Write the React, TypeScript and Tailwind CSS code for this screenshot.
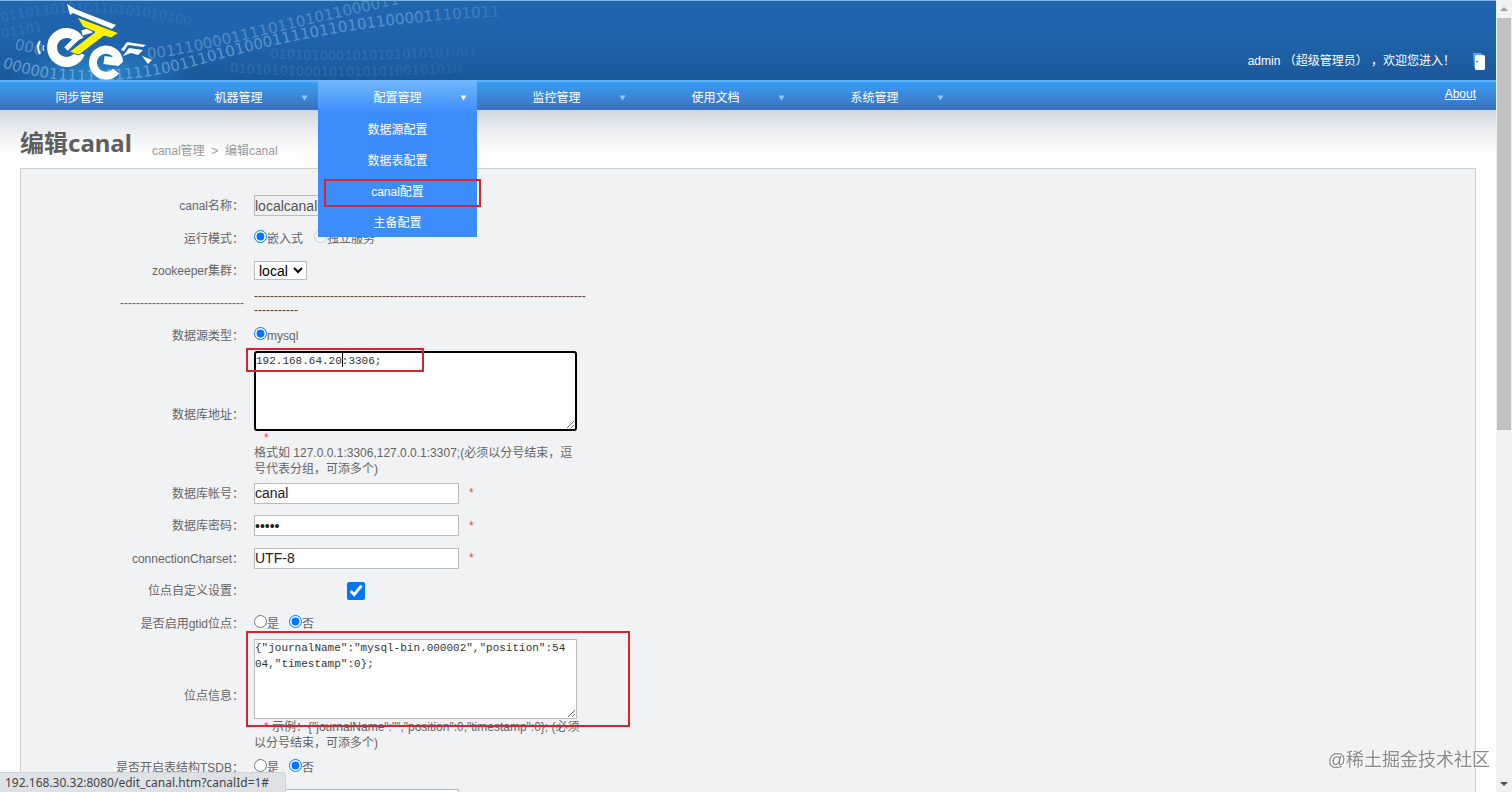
// src/App.tsx
import type { ReactNode } from 'react'

const menus = [
   { title: '同步管理', arrow: false },
   { title: '机器管理', arrow: true },
   { title: '配置管理', arrow: true, items: ['数据源配置', '数据表配置', 'canal配置', '主备配置'] },
   { title: '监控管理', arrow: true },
   { title: '使用文档', arrow: true },
   { title: '系统管理', arrow: true },
]

function Logo() {
   return (
      <svg className="absolute left-0 top-0" width="160" height="79" viewBox="0 1 160 79" fill="none" aria-label="logo">
         {/* wheels */}
         <path d="M80 53 A14.5 14.5 0 1 1 79 40" stroke="#fff" strokeWidth="10" />
         <path d="M66 49 L77 38 M82 33 L92 30" stroke="#fff" strokeWidth="5" />
         <path d="M116 71 A13 13 0 1 1 119 62 L104 60" stroke="#fff" strokeWidth="8" strokeLinejoin="bevel" />
         {/* frame */}
         <path d="M77 17 L119 33 L111 38 L104 36 L79 55 L69 52 L95 32 L83 27 Z" fill="#fff200" stroke="#1f63ab" strokeWidth="1" />
         <path d="M67 4 L75 9 L116 25 L112 29 L80 16 L73 13 L70 15 Z" fill="#fff" />
         {/* tail */}
         <path d="M121 50 L127 42 L146 45 L143 47 L128 45 L124 51 Z" fill="#fff" />
         <path d="M123 56 L129 48 L143 50 L138 55 L131 53 Z" fill="#fff" />
         <path d="M142 56 L152 60 L148 64 Z" fill="#fff" />
         <path d="M40 41 Q36 47 40 54" stroke="#fff" strokeWidth="2" />
         <path d="M44 45 Q42 48 44 51" stroke="#fff" strokeWidth="1" />
      </svg>
   )
}

function Digits() {
   return (
      <svg className="absolute left-0 top-0" width="540" height="79" viewBox="0 1 540 79" aria-hidden="true">
         <defs>
            <radialGradient id="glow">
               <stop offset="0" stopColor="#2f9be0" stopOpacity="0.7" />
               <stop offset="1" stopColor="#2f9be0" stopOpacity="0" />
            </radialGradient>
            <linearGradient id="fade" gradientUnits="userSpaceOnUse" x1="0" x2="540" y1="0" y2="0">
               <stop offset="0" stopColor="#a9d3f5" />
               <stop offset="0.75" stopColor="#8fbfea" />
               <stop offset="1" stopColor="#8fbfea" stopOpacity="0.1" />
            </linearGradient>
            <path id="s1a" d="M14 49 L50 57" />
            <path id="s1b" d="M148 59 C210 52 290 26 420 0" />
            <path id="s2" d="M2 67 C50 84 110 86 180 70 C260 48 350 20 540 15" />
            <path id="s3" d="M2 22 C60 8 140 6 240 40" />
            <path id="s4" d="M270 58 C340 62 400 60 520 52" />
            <path id="s5" d="M2 38 L60 28" />
            <path id="s6" d="M230 72 C300 78 400 78 520 68" />
         </defs>
         <ellipse cx="100" cy="76" rx="90" ry="34" fill="url(#glow)" />
         <g fontFamily="DejaVu Sans, sans-serif" fontSize="15" fill="url(#fade)">
            <text opacity="0.4"><textPath href="#s1a">000</textPath></text>
            <text opacity="0.4"><textPath href="#s1b">001110000111101101011000011</textPath></text>
            <text opacity="0.5"><textPath href="#s2">00000111111111111001110101000111101101011000011101011</textPath></text>
            <g fontSize="13">
               <text opacity="0.12"><textPath href="#s3">01101101010110101010100</textPath></text>
               <text opacity="0.12"><textPath href="#s5">01101</textPath></text>
               <text opacity="0.16"><textPath href="#s4">0101010001010101010101001</textPath></text>
               <text opacity="0.16"><textPath href="#s6">0101010100010101010100101010</textPath></text>
            </g>
         </g>
      </svg>
   )
}

function Row({ label, id, tall, children }: { label: string; id?: string; tall?: boolean; children: ReactNode }) {
   return (
      <div className={tall ? 'flex min-h-[33px] items-center gap-[10px]' : 'flex min-h-8 items-center gap-[10px]'}>
         <label htmlFor={id} className="w-[223px] shrink-0 pt-px text-right">{label}</label>
         <div className="relative w-[332px]">{children}</div>
      </div>
   )
}

function TextField({ id, value, type = 'text' }: { id: string; value: string; type?: string }) {
   return (
      <div className="flex items-center gap-[10px]">
         <input
            id={id}
            type={type}
            defaultValue={value}
            className="h-[21px] w-[205px] border border-[#bbb] bg-white text-sm text-[#222]"
         />
         <Star />
      </div>
   )
}

function Star() {
   return <span className="text-[#e84a4a]">*</span>
}

function Radio({ name, label, checked, disabled }: { name: string; label: string; checked?: boolean; disabled?: boolean }) {
   return (
      <label className="flex items-center pt-px">
         <input type="radio" name={name} defaultChecked={checked} disabled={disabled} className="mb-1 size-[13px]" />
         {label}
      </label>
   )
}

export default function App() {
   return (
      <div className="flex h-screen overflow-hidden bg-white font-['Liberation_Sans','Noto_Sans_CJK_SC',sans-serif] text-xs text-[#666]">
         <div className="min-w-0 flex-1">
            <header className="relative flex h-20 items-end justify-end border-t border-[#7db4e6] bg-linear-to-b from-[#2065ae] via-[#1f63ab] to-[#1b5898] pr-[11px] pb-[10px] text-white">
               <Digits />
               <Logo />
               <div className="flex items-center gap-[18px]">
                  <span>admin （超级管理员） ，欢迎您进入！</span>
                  <button aria-label="退出">
                     <svg width="12" height="18" viewBox="0 0 12 18">
                        <path d="M0 1 L8 1 L11 4 L11 15 L1 16 Z" fill="#5aa5dc" />
                        <rect x="2" y="3" width="10" height="15" rx="1.5" fill="#fff" />
                        <path d="M3 9.5 L5 8.5 L5 10.5 Z" fill="#1f63ab" />
                     </svg>
                  </button>
               </div>
            </header>

            <nav className="relative z-10 flex h-[31px] border-t-2 border-b border-t-[#62b2f6] border-b-[#bcd6f5] bg-linear-to-b from-[#389ef5] to-[#3b70bb] text-white">
               {menus.map((menu) => (
                  <div key={menu.title} className="relative w-[159px]">
                     <a
                        href="#"
                        className={
                           menu.items
                              ? 'relative -mt-[2px] flex h-[33px] items-center justify-center bg-linear-to-b from-[#72b8fb] to-[#3d8cfc] pt-[2px]'
                              : 'flex h-[30px] items-center justify-center pt-px'
                        }
                     >
                        {menu.title}
                        {menu.arrow && (
                           <svg
                              className={menu.items ? 'absolute right-[10px] text-white' : 'absolute right-[10px] text-[#8ccbff]'}
                              width="7"
                              height="6"
                              viewBox="0 0 7 6"
                           >
                              <path d="M0.5 0.5 H6.5 L3.5 5.5 Z" fill="currentColor" />
                           </svg>
                        )}
                     </a>
                     {menu.items && (
                        <ul className="absolute inset-x-0 top-[31px] bg-[#3d8cfc]">
                           {menu.items.map((item) => (
                              <li key={item} className="relative">
                                 <a href="#" className="flex h-[31px] items-center justify-center pt-[2px]">{item}</a>
                                 {item === 'canal配置' && (
                                    <div className="pointer-events-none absolute -right-1 left-[6px] top-1 h-7 border-2 border-[#d9242e]" />
                                 )}
                              </li>
                           ))}
                        </ul>
                     )}
                  </div>
               ))}
               <a href="#" className="mr-5 ml-auto pt-1 underline">About</a>
            </nav>

            <main className="bg-[linear-gradient(#d2d7e0,#eceef1_20px,#fff_44px)] px-5">
               <div className="flex items-end gap-5 pt-4 pb-[9px]">
                  <h1 className="font-['Noto_Sans','Noto_Sans_CJK_SC',sans-serif] text-2xl font-bold text-[#5e5e5e]">编辑canal</h1>
                  <p className="text-[#999]">canal管理 &nbsp;&gt;&nbsp; 编辑canal</p>
               </div>

               <form className="border border-[#ccc] bg-[#f0f2f4] pt-5 pb-10">
                  <Row tall label="canal名称：" id="name">
                     <input
                        id="name"
                        readOnly
                        defaultValue="localcanal"
                        className="block h-[21px] w-[205px] border border-[#bbb] bg-[#f0f0f0] text-sm text-[#555]"
                     />
                  </Row>
                  <Row label="运行模式：">
                     <div className="flex gap-[11px]">
                        <Radio name="mode" label="嵌入式" checked />
                        <Radio name="mode" label="独立服务" disabled />
                     </div>
                  </Row>
                  <Row label="zookeeper集群：" id="zk">
                     <select id="zk" className="block h-[19px] w-[53px] border border-[#bbb] bg-white text-sm leading-4 text-black">
                        <option>local</option>
                     </select>
                  </Row>
                  <Row tall label="-------------------------------">
                     <p className="leading-[14px] text-[#444]">
                        {'-'.repeat(94)}
                     </p>
                  </Row>
                  <Row label="数据源类型：">
                     <Radio name="source" label="mysql" checked />
                  </Row>
                  <Row label="数据库地址：" id="address">
                     <textarea
                        id="address"
                        defaultValue="192.168.64.20:3306;"
                        className="block h-20 w-[323px] rounded-[3px] border-2 border-black bg-white font-['Liberation_Mono',monospace] text-[11px] leading-4 text-[#333] outline-none"
                     />
                     <span className="absolute left-[88px] top-[2px] h-[14px] w-px bg-black" />
                     <div className="absolute -left-2 -top-[3px] h-6 w-[178px] border-2 border-[#d9242e]" />
                     <p className="h-[14px] pl-[10px] leading-[14px]"><Star /></p>
                     <p className="w-[323px]">格式如 127.0.0.1:3306,127.0.0.1:3307;(必须以分号结束，逗号代表分组，可添多个)</p>
                  </Row>
                  <Row label="数据库帐号：" id="user">
                     <TextField id="user" value="canal" />
                  </Row>
                  <Row tall label="数据库密码：" id="password">
                     <TextField id="password" type="password" value="canal" />
                  </Row>
                  <Row label="connectionCharset：" id="charset">
                     <TextField id="charset" value="UTF-8" />
                  </Row>
                  <Row tall label="位点自定义设置：" id="custom">
                     <div className="flex w-[203px] justify-center">
                        <input id="custom" type="checkbox" defaultChecked className="size-[18px]" />
                     </div>
                  </Row>
                  <Row label="是否启用gtid位点：">
                     <div className="flex gap-[10px]">
                        <Radio name="gtid" label="是" />
                        <Radio name="gtid" label="否" checked />
                     </div>
                  </Row>
                  <Row label="位点信息：" id="position">
                     <textarea
                        id="position"
                        defaultValue={'{"journalName":"mysql-bin.000002","position":5404,"timestamp":0};'}
                        className="block h-20 w-[323px] border border-[#bbb] bg-white pr-2 font-['Liberation_Mono',monospace] text-[11px] leading-4 break-all text-[#333]"
                     />
                     <div className="absolute -left-2 -top-2 h-24 w-[384px] border-2 border-[#d9242e]" />
                     <p className="indent-[10px]">
                        <Star /> 示例：{'{"journalName":"","position":0,"timestamp":0};'} (必须以分号结束，可添多个)
                     </p>
                  </Row>
                  <Row label="是否开启表结构TSDB：">
                     <div className="flex gap-[10px]">
                        <Radio name="tsdb" label="是" />
                        <Radio name="tsdb" label="否" checked />
                     </div>
                  </Row>
                  <Row label="rds accesskey：" id="rds">
                     <input id="rds" className="block h-[21px] w-[205px] border border-[#bbb] bg-white text-sm" />
                  </Row>
               </form>
            </main>
         </div>

         {/* scrollbar */}
         <div className="flex w-4 flex-col items-center bg-[#f1f1f1]">
            <svg className="my-[5px] shrink-0" width="8" height="8" viewBox="0 0 8 8"><path d="M0 6 L4 2 L8 6 Z" fill="#a0a0a0" /></svg>
            <div className="h-[52%] w-[14px] bg-[#c1c1c1]" />
            <svg className="mt-auto mb-1 shrink-0" width="8" height="8" viewBox="0 0 8 8"><path d="M0 2 L4 6 L8 2 Z" fill="#505050" /></svg>
         </div>

         <div className="fixed bottom-0 left-0 z-20 h-5 rounded-tr border-t border-r border-[#d0d3d8] bg-[#dee1e6] pr-4 pl-[5px] font-['Noto_Sans',sans-serif] leading-5 text-[#444]">
            192.168.30.32:8080/edit_canal.htm?canalId=1#
         </div>
         <div className="fixed right-[22px] bottom-5 z-20 text-lg leading-6 text-[#8a8a8a] [text-shadow:1px_1px_0_#fff]">
            @稀土掘金技术社区
         </div>
      </div>
   )
}
